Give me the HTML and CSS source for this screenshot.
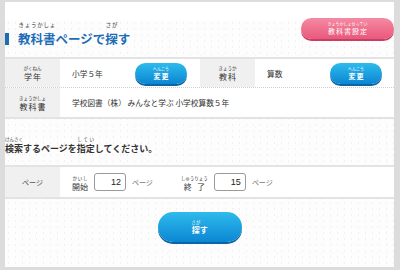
FILE: index.html
```html
<!DOCTYPE html>
<html lang="ja">
<head>
    <meta charset="UTF-8">
    <title>教科書ページで探す</title>
    <link rel="stylesheet" href="styles.css">
</head>
<body>
    <div class="page">
        <div class="head">
            <h1 class="title">
                <span class="bar"></span>
                <span class="title-text"><ruby>教科書<rt>きょうかしょ</rt></ruby>ページで<ruby>探<rt>さが</rt></ruby>す</span>
            </h1>
            <button class="btn-pink"><ruby>教科書設定<rt>きょうかしょせってい</rt></ruby></button>
        </div>

        <div class="box">
            <div class="row">
                <div class="label"><ruby>学年<rt>がくねん</rt></ruby></div>
                <div class="value"><span class="val">小学５年</span><button class="btn-blue btn-small"><ruby>変更<rt>へんこう</rt></ruby></button></div>
                <div class="label"><ruby>教科<rt>きょうか</rt></ruby></div>
                <div class="value"><span class="val">算数</span><button class="btn-blue btn-small"><ruby>変更<rt>へんこう</rt></ruby></button></div>
            </div>
            <div class="row row-book">
                <div class="label"><ruby>教科書<rt>きょうかしょ</rt></ruby></div>
                <div class="value">学校図書（株） みんなと学ぶ 小学校算数５年</div>
            </div>
        </div>

        <h2 class="lead"><ruby>検索<rt>けんさく</rt></ruby>するページを<ruby>指定<rt>してい</rt></ruby>してください。</h2>

        <div class="box">
            <div class="row row-page">
                <div class="label label-plain">ページ</div>
                <div class="value">
                    <span class="field"><ruby>開始<rt>かいし</rt></ruby><input class="num" type="text" value="12"><span class="unit">ページ</span></span>
                    <span class="field field-end"><ruby>終了<rt>しゅうりょう</rt></ruby><input class="num" type="text" value="15"><span class="unit">ページ</span></span>
                </div>
            </div>
        </div>

        <div class="actions">
            <button class="btn-blue btn-big"><ruby>探<rt>さが</rt></ruby>す</button>
        </div>
    </div>
</body>
</html>
```

FILE: styles.css
```css
body { margin: 0; background: #dcdcdc; font-family: "Noto Sans CJK JP", sans-serif; color: #333; }
.page { margin: 2px 6px 0 5px; height: 265px; background-color: #fdfdfd; background-image: radial-gradient(#f1f1f1 0.6px, transparent 0.9px), radial-gradient(#f3f3f3 0.6px, transparent 0.9px); background-size: 7px 6px, 11px 9px; background-position: 0 0, 3px 4px; }
ruby rt { font-size: 5px; line-height: 1; font-weight: normal; }

.head { height: 55px; display: flex; justify-content: space-between; align-items: flex-start; background: linear-gradient(#fff 18px, transparent 18px); }
.title { margin: 19px 0 0; display: flex; align-items: flex-end; font-size: 12.5px; line-height: 14px; color: #1d6db6; font-weight: bold; }
.bar { width: 4px; height: 12px; background: #1d6db6; margin-bottom: 1px; margin-right: 9px; }
.title rt { font-size: 5.5px; color: #333; padding-bottom: 4px; }

button { font-family: inherit; border: 0; cursor: pointer; color: #fff; padding: 0; }
button rt { color: #fff; font-size: 4px; }
.btn-pink { margin-top: 16px; width: 93px; height: 21px; border-radius: 11px; font-size: 7px; line-height: 8px; background: linear-gradient(#f58aa3, #e9587c); box-shadow: 0 2px 0 #c93e62; }
.btn-blue { background: linear-gradient(#2ebbec, #0c86d3); box-shadow: 0 2px 0 #0b66a6; font-weight: bold; }
.btn-small { width: 52px; height: 21px; border-radius: 11px; font-size: 7px; line-height: 8px; }
.btn-big { width: 84px; height: 30px; border-radius: 15px; font-size: 8px; line-height: 9px; }
.btn-big rt { font-size: 4.5px; }

.box { border-top: 2px solid #e3e3e3; border-bottom: 2px solid #e3e3e3; background: #fff; }
.row { display: grid; grid-template-columns: 55px 140px 55px 1fr; height: 28px; }
.row-book { grid-template-columns: 55px 1fr; height: 29px; border-top: 1px dotted #cfcfcf; }
.row-page { grid-template-columns: 55px 1fr; height: 30px; }
.label { background: #f0f0f0; display: flex; align-items: center; justify-content: center; font-size: 8px; line-height: 9px; }
.label rt { font-size: 4.5px; padding-bottom: 1px; }
.label-plain { color: #555; font-size: 7px; }
.value { display: flex; align-items: center; padding-left: 12px; font-size: 7.7px; }
.val { width: 63px; }

.lead { margin: 0; height: 46px; display: flex; align-items: flex-end; padding-bottom: 11px; box-sizing: border-box; font-size: 9px; line-height: 11px; font-weight: bold; color: #333; }
.lead rt { font-size: 4.5px; padding-bottom: 2px; }

.field { display: flex; align-items: flex-end; font-size: 8px; line-height: 9px; }
.field rt { font-size: 4.5px; padding-bottom: 1px; }
.field-end { margin-left: 28px; }
.num { width: 32px; height: 18px; box-sizing: border-box; margin: 0 6px 0 6px; border: 1px solid #9a9a9a; border-radius: 3px; text-align: right; padding: 0 4px; font-family: "Liberation Sans", sans-serif; font-size: 9px; color: #222; }
.unit { color: #777; font-size: 7px; padding-bottom: 4px; }

.actions { display: flex; justify-content: center; padding-top: 13px; }
```
